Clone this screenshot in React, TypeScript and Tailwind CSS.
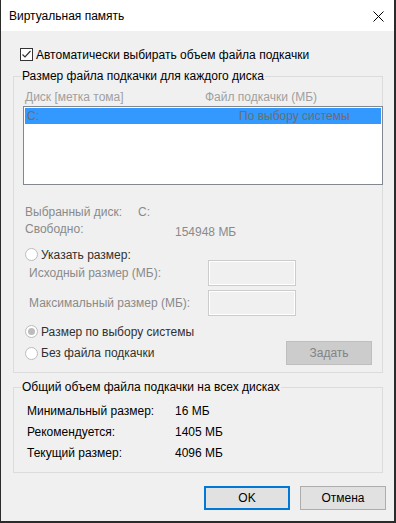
import React from "react";

const font = { fontFamily: '"Segoe UI", "Liberation Sans", Arial, sans-serif' };

function Radio({ checked = false }: { checked?: boolean }) {
  return (
    <span className="flex h-[13px] w-[13px] shrink-0 items-center justify-center rounded-full border border-[#bcbcbc] bg-white">
      {checked && <span className="h-[7px] w-[7px] rounded-full bg-[#bcbcbc]" />}
    </span>
  );
}

function GroupLegend({ children }: { children: React.ReactNode }) {
  return (
    <div className="-mt-[8px] ml-[7px] h-[15px] self-start bg-[#f0f0f0] px-[1px] leading-[15px] text-black">
      {children}
    </div>
  );
}

function SizeInput() {
  return <div className="h-[26px] w-[88px] border border-[#cccccc] bg-[#f0f0f0] shadow-[inset_0_0_0_1px_#ffffff]" />;
}

export default function App() {
  return (
    <div
      className="flex h-[523px] w-[396px] flex-col border-b-2 border-l border-r-2 border-[#2b2b2b] bg-[#f0f0f0] text-[12px] text-black"
      style={font}
    >
      {/* title bar */}
      <div className="flex h-[31px] shrink-0 items-center justify-between bg-white pl-[8px] pr-[10px]">
        <span className="leading-none">Виртуальная память</span>
        <svg width="11" height="11" viewBox="0 0 11 11" className="mt-[1px]">
          <path d="M0.5 0.5 L10.5 10.5 M10.5 0.5 L0.5 10.5" stroke="#000" strokeWidth="1" />
        </svg>
      </div>

      {/* auto checkbox */}
      <div className="ml-[19px] mt-[15px] flex h-[17px] items-center gap-[3px]">
        <span className="flex h-[13px] w-[13px] items-center justify-center border border-[#333333] bg-white">
          <svg width="11" height="11" viewBox="0 0 11 11">
            <path d="M1.5 5.5 L4 8 L9.5 2" stroke="#333" strokeWidth="1.2" fill="none" />
          </svg>
        </span>
        <span>Автоматически выбирать объем файла подкачки</span>
      </div>

      {/* group 1 */}
      <div className="ml-[12px] mt-[13px] flex h-[297px] w-[370px] flex-col border border-[#dcdcdc]">
        <GroupLegend>Размер файла подкачки для каждого диска</GroupLegend>

        <div className="mt-[4px] flex h-[18px] items-center text-[#a0a0a0]">
          <span className="ml-[11px] w-[180px]">Диск [метка тома]</span>
          <span>Файл подкачки (МБ)</span>
        </div>

        <div className="ml-[9px] h-[79px] w-[360px] shrink-0 border border-[#828790] bg-white p-[1px]">
          <div className="flex h-[16px] items-center bg-[#3399ff] text-[#6d6d6d]">
            <span className="ml-[2px] w-[212px]">C:</span>
            <span>По выбору системы</span>
          </div>
        </div>

        <div className="mt-[19px] flex h-[16px] items-center text-[#8a8a8a]">
          <span className="ml-[11px] w-[113px]">Выбранный диск:</span>
          <span>C:</span>
        </div>
        <div className="flex h-[16px] items-start text-[#8a8a8a]">
          <span className="ml-[11px] w-[150px]">Свободно:</span>
          <span className="mt-[3px]">154948 МБ</span>
        </div>

        <div className="mt-[11px] flex h-[15px] items-center gap-[3px] pl-[11px] text-[#303030]">
          <Radio />
          <span>Указать размер:</span>
        </div>

        <div className="mt-[-2px] flex h-[26px] items-center text-[#8a8a8a]">
          <span className="ml-[15px] w-[179px]">Исходный размер (МБ):</span>
          <SizeInput />
        </div>
        <div className="mt-[4px] flex h-[26px] items-center text-[#8a8a8a]">
          <span className="ml-[15px] w-[179px]">Максимальный размер (МБ):</span>
          <SizeInput />
        </div>

        <div className="mt-[8px] flex h-[15px] items-center gap-[3px] pl-[11px] text-[#303030]">
          <Radio checked />
          <span>Размер по выбору системы</span>
        </div>
        <div className="mt-[2px] flex h-[24px] items-center pl-[11px] text-[#303030]">
          <Radio />
          <span className="ml-[3px] w-[245px]">Без файла подкачки</span>
          <button className="h-[24px] w-[86px] border border-[#bfbfbf] bg-[#cccccc] text-[#838383]">Задать</button>
        </div>
      </div>

      {/* group 2 */}
      <div className="ml-[12px] mt-[14px] flex h-[86px] w-[370px] flex-col border border-[#dcdcdc]">
        <GroupLegend>Общий объем файла подкачки на всех дисках</GroupLegend>
        <div className="mt-[5px] flex flex-col pl-[13px]">
          {[
            ["Минимальный размер:", "16 МБ"],
            ["Рекомендуется:", "1405 МБ"],
            ["Текущий размер:", "4096 МБ"],
          ].map(([k, v]) => (
            <div key={k} className="flex h-[21px] items-center">
              <span className="w-[148px]">{k}</span>
              <span>{v}</span>
            </div>
          ))}
        </div>
      </div>

      {/* buttons */}
      <div className="mt-[13px] flex gap-[10px] pl-[203px]">
        <button className="h-[24px] w-[86px] border-2 border-[#0078d7] bg-[#e1e1e1]">OK</button>
        <button className="h-[24px] w-[86px] border border-[#adadad] bg-[#e1e1e1]">Отмена</button>
      </div>
    </div>
  );
}
